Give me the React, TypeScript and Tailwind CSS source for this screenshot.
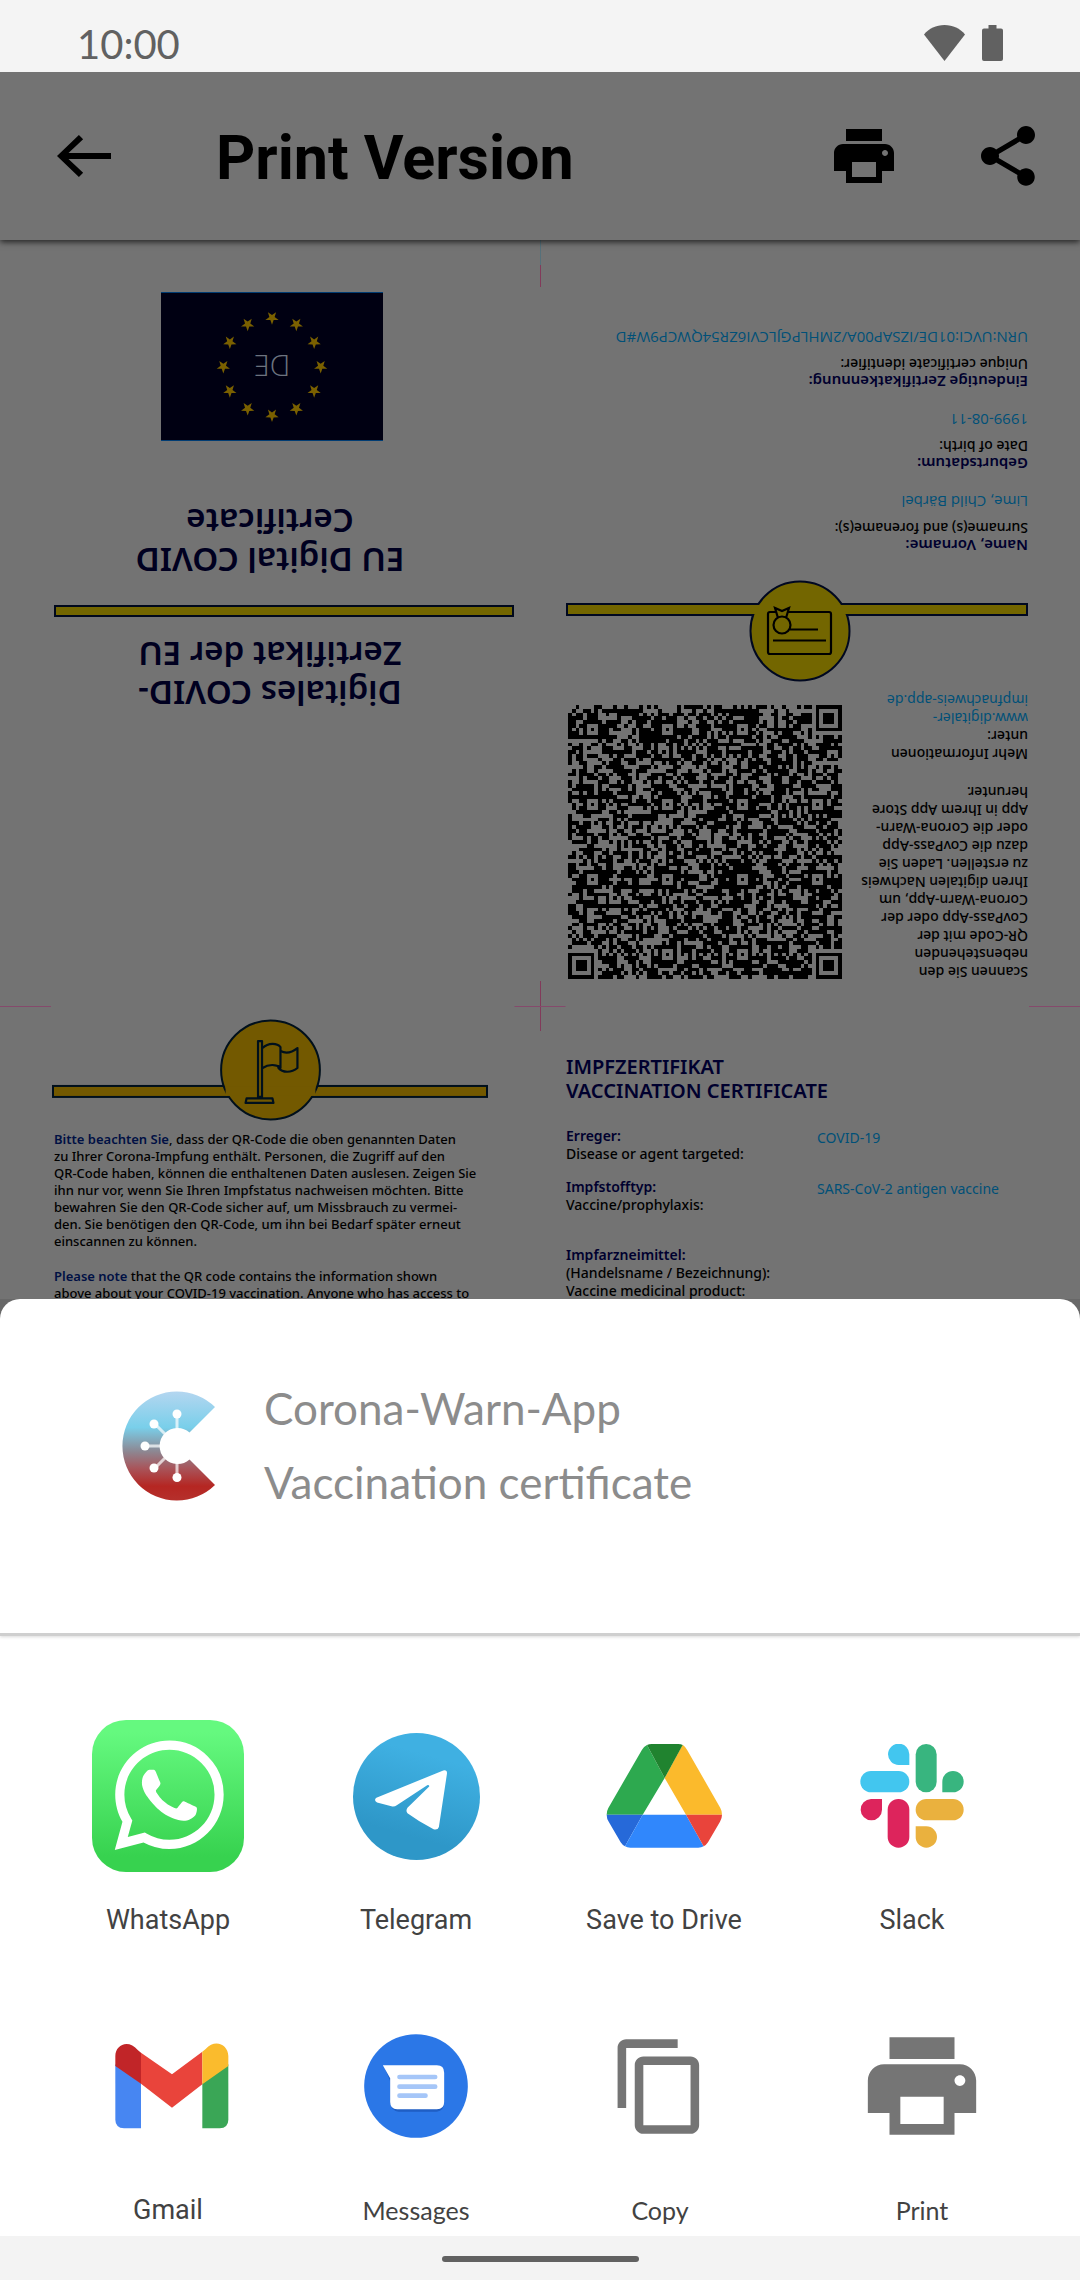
import React from "react";

const QR_SIZE = 73;
const QR_CENTERS = [6, 26, 46, 66];

function buildQrPath(): string {
  let seed = 20210811;
  const next = () => {
    seed = (Math.imul(seed, 1664525) + 1013904223) >>> 0;
    return seed / 4294967296;
  };
  const last = QR_SIZE - 7;
  const finders = [
    [0, 0],
    [last, 0],
    [0, last],
  ];
  let path = "";
  for (let y = 0; y < QR_SIZE; y++) {
    for (let x = 0; x < QR_SIZE; x++) {
      let on = next() < 0.57;
      if (x === 6 || y === 6) on = (x + y) % 2 === 0;
      for (const cx of QR_CENTERS) {
        for (const cy of QR_CENTERS) {
          const corner =
            (cx === 6 && cy === 6) || (cx === 6 && cy === 66) || (cx === 66 && cy === 6);
          const d = Math.max(Math.abs(x - cx), Math.abs(y - cy));
          if (!corner && d <= 2) on = d !== 1;
        }
      }
      for (const [fx, fy] of finders) {
        const d = Math.max(Math.abs(x - fx - 3), Math.abs(y - fy - 3));
        if (d <= 4) on = d <= 1 || d === 3;
      }
      if (on) path += `M${x} ${y}h1v1h-1z`;
    }
  }
  return path;
}

const qrPath = buildQrPath();

const PRINT_PATH =
  "M19 8H5c-1.66 0-3 1.34-3 3v6h4v4h12v-4h4v-6c0-1.66-1.34-3-3-3zm-3 11H8v-5h8v5zm3-7c-.55 0-1-.45-1-1s.45-1 1-1 1 .45 1 1-.45 1-1 1zm-1-9H6v4h12V3z";

function StatusBar() {
  return (
    <div className="relative z-20 flex h-[72px] shrink-0 items-end justify-between bg-[#f4f4f4] pr-[77px] pb-[11px] pl-[77px] text-[#616161]">
      <span className="font-['Lato',sans-serif] text-[40px] leading-[34px]">10:00</span>
      <div className="flex items-center gap-[17px]">
        <svg className="h-9 w-[41px]" viewBox="0 0 41 36" fill="currentColor" aria-label="Wi-Fi">
          <path d="M20.500 36L0 9.500C5 3.500 12 0 20.500 0S36 3.500 41 9.500z" />
        </svg>
        <svg className="h-9 w-[21px]" viewBox="0 0 21 36" fill="currentColor" aria-label="Battery">
          <path d="M6.500 0h8v3.500H19a2 2 0 0 1 2 2V34a2 2 0 0 1-2 2H2a2 2 0 0 1-2-2V5.500a2 2 0 0 1 2-2h4.500z" />
        </svg>
      </div>
    </div>
  );
}

function Header() {
  return (
    <header className="relative z-10 flex h-[168px] shrink-0 items-center bg-[#737373] pr-9 pl-12 text-black shadow-[0_2px_6px_rgba(0,0,0,0.7)]">
      <button type="button" aria-label="Back">
        <svg className="size-[72px]" viewBox="0 0 24 24" fill="currentColor">
          <path d="M21 11H6.830l4.880-4.590L10.300 5 3 12l7.300 7 1.410-1.410L6.830 13H21z" />
        </svg>
      </button>
      <h1 className="ml-24 flex-1 pt-1 font-['Roboto',sans-serif] text-[61px] leading-[72px] font-bold">
        Print Version
      </h1>
      <button type="button" aria-label="Print">
        <svg className="size-[72px]" viewBox="0 0 24 24" fill="currentColor">
          <path d={PRINT_PATH} />
        </svg>
      </button>
      <button type="button" aria-label="Share" className="ml-[72px]">
        <svg className="size-[72px]" viewBox="0 0 24 24" fill="currentColor">
          <path d="M18 16.080c-.76 0-1.440.3-1.960.77L8.910 12.700c.05-.23.09-.46.09-.7s-.04-.47-.09-.7l7.050-4.110c.54.5 1.250.81 2.040.81 1.660 0 3-1.340 3-3s-1.340-3-3-3-3 1.340-3 3c0 .24.04.47.09.7L8.040 9.810C7.500 9.310 6.790 9 6 9c-1.660 0-3 1.340-3 3s1.340 3 3 3c.79 0 1.500-.31 2.040-.81l7.120 4.160c-.05.21-.08.43-.08.65 0 1.610 1.310 2.920 2.920 2.920s2.920-1.310 2.920-2.920-1.310-2.920-2.920-2.920z" />
        </svg>
      </button>
    </header>
  );
}

function starPoints(cx: number, cy: number, r: number): string {
  return Array.from({ length: 10 }, (_, i) => {
    const radius = i % 2 === 0 ? r : r * 0.4;
    const a = (Math.PI * i) / 5 - Math.PI / 2;
    return `${(cx + radius * Math.cos(a)).toFixed(2)},${(cy + radius * Math.sin(a)).toFixed(2)}`;
  }).join(" ");
}

function EuFlag() {
  return (
    <div className="relative h-[149px] w-[222px] border-y border-[#003c73] bg-[#000012]">
      <svg className="absolute inset-0 size-full" viewBox="0 0 222 148" fill="#7a6000">
        {Array.from({ length: 12 }, (_, i) => {
          const a = (Math.PI * i) / 6;
          return (
            <polygon key={i} points={starPoints(111 + 49 * Math.sin(a), 74 - 49 * Math.cos(a), 7)} />
          );
        })}
      </svg>
      <span className="absolute inset-0 flex items-center justify-center font-['Open_Sans',sans-serif] text-[29px] font-light text-[#6d7480]">
        DE
      </span>
    </div>
  );
}

function CoverPanel() {
  return (
    <section className="flex h-[766px] rotate-180 flex-col pt-[293px] text-[#000020]">
      <h2 className="text-center text-[33px] leading-[39px] font-semibold">
        Digitales COVID-
        <br />
        Zertifikat der EU
      </h2>
      <div className="mt-[18px] mr-[54px] ml-[26px] h-3 border-2 border-[#00081c] bg-[#736600]" />
      <h2 className="mt-[25px] text-center text-[33px] leading-[39px] font-semibold">
        EU Digital COVID
        <br />
        Certificate
      </h2>
      <div className="mt-[61px] mr-1 self-center">
        <EuFlag />
      </div>
    </section>
  );
}

function CardDivider() {
  return (
    <svg className="block h-[102px] w-full rotate-180" viewBox="0 0 462 102" fill="none" stroke="#000820">
      <g fill="#736600" strokeWidth="2">
        <rect x="1" y="24" width="460" height="11" />
        <circle cx="234" cy="51" r="49.500" />
      </g>
      <rect x="182" y="25" width="104" height="9" fill="#736600" stroke="none" />
      <g stroke="#000" strokeWidth="2.200">
        <rect x="202" y="32" width="63" height="42" rx="2" />
        <path d="M224 49.500h28M207 60.500h53" />
        <path d="M212 38l-3-10 7 3 7-3-3 10" fill="#736600" />
        <circle cx="216" cy="45" r="8.500" fill="#736600" />
      </g>
    </svg>
  );
}

const holder = [
  { de: "Name, Vorname:", en: "Surname(s) and forename(s):", value: "Lime, Child Bärbel" },
  { de: "Geburtsdatum:", en: "Date of birth:", value: "1999-08-11" },
  {
    de: "Eindeutige Zertifikatkennung:",
    en: "Unique certificate identifier:",
    value: "URN:UVCI:01DE/IZSAP00A/2MHLPGJLCVI6ZR54QWCP9W#D",
  },
];

function HolderPanel() {
  return (
    <section className="flex h-[766px] rotate-180 flex-col pt-[25px] pr-[26px] pl-[52px]">
      <div className="flex h-[299px] justify-between">
        <div className="text-[14px] leading-[18px] font-medium whitespace-nowrap text-black">
          <p>
            Scannen Sie den
            <br />
            nebenstehenden
            <br />
            QR-Code mit der
            <br />
            CovPass-App oder der
            <br />
            Corona-Warn-App, um
            <br />
            Ihren digitalen Nachweis
            <br />
            zu erstellen. Laden Sie
            <br />
            dazu die CovPass-App
            <br />
            oder die Corona-Warn-
            <br />
            App in Ihrem App Store
            <br />
            herunter.
          </p>
          <p className="mt-5">
            Mehr Informationen
            <br />
            unter:
            <br />
            <a href="#app" className="font-normal text-[#005078]">
              www.digitaler-
              <br />
              impfnachweis-app.de
            </a>
          </p>
        </div>
        <svg
          className="mt-0.5 mr-0.5 size-[274px] shrink-0"
          viewBox="0 0 73 73"
          shapeRendering="crispEdges"
          aria-label="QR code"
        >
          <path d={qrPath} fill="#000" />
        </svg>
      </div>
      <CardDivider />
      <dl className="mt-[25px] flex flex-col gap-5 text-[14px] leading-[18px] whitespace-nowrap">
        {holder.map((f) => (
          <div key={f.de}>
            <dt className="text-[15px] font-semibold text-[#00002e]">{f.de}</dt>
            <dt className="font-medium text-black">{f.en}</dt>
            <dd className="mt-2 font-['Open_Sans',sans-serif] text-[15px] text-[#005078]">{f.value}</dd>
          </div>
        ))}
      </dl>
    </section>
  );
}

function FlagDivider() {
  return (
    <svg className="block h-[104px] w-full" viewBox="0 0 438 104" fill="none" stroke="#00101c">
      <g fill="#735900" strokeWidth="2">
        <rect x="1" y="67" width="435" height="11" />
        <circle cx="219" cy="51" r="49.500" />
      </g>
      <rect x="174" y="68" width="90" height="9" fill="#735900" stroke="none" />
      <g strokeWidth="2.200" strokeLinejoin="round">
        <path d="M206.500 22h4v56h-4zM195 79.500h26l1 4.500h-28z" />
        <path d="M211 29c6-6 15-5 18-1v21c-4-4-12-4-18 0" />
        <path d="M229 32c6 3 12 1 17-3v20c-6 5-15 5-19 0v-3" />
      </g>
    </svg>
  );
}

function NoticePanel() {
  return (
    <section className="pt-[13px] pr-[51px] pl-[52px]">
      <FlagDivider />
      <div className="mt-2 flex flex-col gap-[18px] pl-0.5 text-[13px] leading-[17px] font-medium whitespace-nowrap text-black">
        <p>
          <span className="font-semibold text-[#001044]">Bitte beachten Sie</span>, dass der QR-Code die oben
          genannten Daten
          <br />
          zu Ihrer Corona-Impfung enthält. Personen, die Zugriff auf den
          <br />
          QR-Code haben, können die enthaltenen Daten auslesen. Zeigen Sie
          <br />
          ihn nur vor, wenn Sie Ihren Impfstatus nachweisen möchten. Bitte
          <br />
          bewahren Sie den QR-Code sicher auf, um Missbrauch zu vermei-
          <br />
          den. Sie benötigen den QR-Code, um ihn bei Bedarf später erneut
          <br />
          einscannen zu können.
        </p>
        <p>
          <span className="font-semibold text-[#001044]">Please note</span> that the QR code contains the information
          shown
          <br />
          above about your COVID-19 vaccination. Anyone who has access to
        </p>
      </div>
    </section>
  );
}

function VaccinePanel() {
  return (
    <section className="pt-[49px] pr-6 pl-[26px]">
      <h2 className="text-[20px] leading-6 font-semibold text-[#00002e]">
        IMPFZERTIFIKAT
        <br />
        VACCINATION CERTIFICATE
      </h2>
      <dl className="mt-6 grid grid-cols-[251px_1fr] text-[14px] leading-[18px] whitespace-nowrap">
        <dt className="font-medium text-black">
          <span className="font-semibold text-[#00002e]">Erreger:</span>
          <br />
          Disease or agent targeted:
        </dt>
        <dd className="pt-0.5 text-[#005078]">COVID-19</dd>
        <dt className="mt-[15px] font-medium text-black">
          <span className="font-semibold text-[#00002e]">Impfstofftyp:</span>
          <br />
          Vaccine/prophylaxis:
        </dt>
        <dd className="mt-[15px] pt-0.5 text-[#005078]">SARS-CoV-2 antigen vaccine</dd>
        <dt className="mt-[32px] font-medium text-black">
          <span className="font-semibold text-[#00002e]">Impfarzneimittel:</span>
          <br />
          (Handelsname / Bezeichnung):
          <br />
          Vaccine medicinal product:
        </dt>
      </dl>
    </section>
  );
}

function DocumentPreview() {
  return (
    <main className="relative min-h-0 flex-1 overflow-hidden bg-[#737373] font-['Noto_Sans','Open_Sans',sans-serif]">
      <div className="grid grid-cols-2">
        <CoverPanel />
        <HolderPanel />
        <NoticePanel />
        <VaccinePanel />
      </div>
      <div className="absolute top-0 left-1/2 h-[25px] w-px bg-[#55707a]" />
      <div className="absolute top-[25px] left-1/2 h-[22px] w-px bg-[#823a5a]" />
      <div className="absolute top-[741px] left-1/2 h-[50px] w-px bg-[#823a5a]" />
      <div className="absolute top-[766px] left-0 h-px w-[51px] bg-[#854a6c]" />
      <div className="absolute top-[766px] left-1/2 h-px w-[51px] -translate-x-1/2 bg-[#854a6c]" />
      <div className="absolute top-[766px] right-0 h-px w-[51px] bg-[#854a6c]" />
    </main>
  );
}

function CoronaWarnLogo() {
  return (
    <svg className="h-[110px] w-[94px] shrink-0" viewBox="122 1391 94 110">
      <defs>
        <linearGradient id="cwa" x1="0" y1="0" x2="0" y2="1">
          <stop offset="0" stopColor="#b4d6f0" />
          <stop offset="0.330" stopColor="#79cfea" />
          <stop offset="0.550" stopColor="#8d8792" />
          <stop offset="0.700" stopColor="#a8565c" />
          <stop offset="0.870" stopColor="#b52622" />
          <stop offset="1" stopColor="#b5302c" />
        </linearGradient>
      </defs>
      <path d="M215 1407L189.500 1432.500A18 18 0 1 0 189.500 1459.500L215 1485A54.500 54.500 0 1 1 215 1407z" fill="url(#cwa)" />
      <g stroke="#fff" strokeWidth="3" strokeOpacity="0.700">
        <path d="M177 1430V1413M165 1434L154 1423M161 1446H145M165 1458L154 1469M177 1462V1478" />
      </g>
      <g fill="#fff">
        <circle cx="177" cy="1414" r="4.500" />
        <circle cx="154" cy="1424" r="4.500" />
        <circle cx="145" cy="1446" r="4.500" />
        <circle cx="154" cy="1468" r="4.500" />
        <circle cx="177" cy="1477.500" r="4.500" />
      </g>
    </svg>
  );
}

function WhatsAppIcon() {
  return (
    <svg className="size-[152px]" viewBox="0 0 152 152">
      <defs>
        <linearGradient id="wa" x1="0" y1="0" x2="0" y2="1">
          <stop offset="0.080" stopColor="#65f97f" />
          <stop offset="0.900" stopColor="#37d24f" />
        </linearGradient>
      </defs>
      <rect width="152" height="152" rx="34" fill="url(#wa)" />
      <path
        transform="translate(22.500 20.500) scale(4.560)"
        fill="#fff"
        d="M17.472 14.382c-.297-.149-1.758-.867-2.030-.967-.273-.099-.471-.148-.67.15-.197.297-.767.966-.94 1.164-.173.199-.347.223-.644.075-.297-.15-1.255-.463-2.390-1.475-.883-.788-1.480-1.761-1.653-2.059-.173-.297-.018-.458.13-.606.134-.133.298-.347.446-.52.149-.174.198-.298.298-.497.099-.198.05-.371-.025-.52-.075-.149-.669-1.612-.916-2.207-.242-.579-.487-.5-.669-.51-.173-.008-.371-.01-.57-.01-.198 0-.52.074-.792.372-.272.297-1.040 1.016-1.040 2.479 0 1.462 1.065 2.875 1.213 3.074.149.198 2.096 3.200 5.077 4.487.709.306 1.262.489 1.694.625.712.227 1.360.195 1.871.118.571-.085 1.758-.719 2.006-1.413.248-.694.248-1.289.173-1.413-.074-.124-.272-.198-.57-.347m-5.421 7.403h-.004a9.870 9.870 0 01-5.031-1.378l-.361-.214-3.741.982.998-3.648-.235-.374a9.860 9.860 0 01-1.510-5.260c.001-5.450 4.436-9.884 9.888-9.884 2.640 0 5.122 1.030 6.988 2.898a9.825 9.825 0 012.893 6.994c-.003 5.450-4.437 9.884-9.885 9.884m8.413-18.297A11.815 11.815 0 0012.050 0C5.495 0 .16 5.335.157 11.892c0 2.096.547 4.142 1.588 5.945L.057 24l6.305-1.654a11.882 11.882 0 005.683 1.448h.005c6.554 0 11.890-5.335 11.893-11.893a11.821 11.821 0 00-3.480-8.413z"
      />
    </svg>
  );
}

function TelegramIcon() {
  return (
    <svg className="size-[127px]" viewBox="877 131 380 380">
      <defs>
        <linearGradient id="tg" x1="0.600" y1="0.100" x2="0.400" y2="0.800">
          <stop offset="0.100" stopColor="#3fb0e2" />
          <stop offset="1" stopColor="#2e97c8" />
        </linearGradient>
      </defs>
      <circle cx="1067" cy="321" r="190" fill="url(#tg)" />
      <path
        fill="#fff"
        d="M947 325L1147 243Q1160 240 1158 254L1134 412Q1131 422 1118 419Q1074 396 1040 371Q1034 365 1040 355L1105 291Q1106 286 1099 287L1008 347Q1001 352 992 350L949 339Q938 332 947 325z"
      />
    </svg>
  );
}

function DriveIcon() {
  return (
    <svg className="h-[104px] w-[116px]" viewBox="195 155 348 312">
      <path fill="#2da94f" d="M318 158Q308 163 303 172L202 347Q197 356 197 367H305L371 257z" />
      <path fill="#fbba2c" d="M425 157Q433 163 438 172L538 347Q543 356 543 367H435L371 257z" />
      <path fill="#20832f" d="M318 158Q324 155 332 155H412Q420 155 425 158L371 257z" />
      <path fill="#2669d9" d="M197 367H305L252 462Q244 458 239 450L204 390Q197 380 197 367z" />
      <path fill="#3087fc" d="M305 367H435L488 462Q481 466 472 466H268Q258 466 252 462z" />
      <path fill="#e9443b" d="M435 367H543Q543 378 537 388L501 450Q496 458 488 462z" />
    </svg>
  );
}

function SlackIcon() {
  return (
    <svg className="size-[104px]" viewBox="966 155 310 312">
      <g fill="#42c6ef">
        <path d="M1113 218H1081A32 32 0 1 1 1113 187z" />
        <rect x="966" y="236" width="147" height="64" rx="32" />
      </g>
      <g fill="#38b57f">
        <rect x="1132" y="155" width="63" height="145" rx="31.500" />
        <path d="M1212 300V268A32 32 0 1 1 1244 300z" />
      </g>
      <g fill="#dd245c">
        <path d="M1031 320V352A32 32 0 1 1 998 320z" />
        <rect x="1048" y="320" width="65" height="146" rx="32" />
      </g>
      <g fill="#eab13e">
        <rect x="1132" y="320" width="144" height="64" rx="32" />
        <path d="M1132 402H1164A32 32 0 1 1 1132 434z" />
      </g>
    </svg>
  );
}

function GmailIcon() {
  return (
    <svg className="h-[86px] w-[122px]" viewBox="141 126 366 258">
      <path fill="#4786f2" d="M166 190L243 247V382H192Q166 380 166 356z" />
      <path fill="#3aa656" d="M505 190L427 247V382H479Q505 380 505 356z" />
      <path fill="#e9443b" d="M243 155L336 220L427 152V250L336 320L243 248z" />
      <path fill="#c12528" d="M166 195V165C166 132 205 113 234 148L243 155V248z" />
      <path fill="#fabb2d" d="M505 195V165C505 132 466 111 437 144L427 152V250z" />
    </svg>
  );
}

function MessagesIcon() {
  return (
    <svg className="size-[104px]" viewBox="912 103 311 312">
      <circle cx="1067.500" cy="259" r="155.500" fill="#2b77e7" />
      <path fill="#1f5ec4" d="M975 208L990 245V310Q995 336 1015 336H1130Q1152 334 1152 308V300z" />
      <path fill="#fff" d="M968 197H1130Q1152 197 1152 219V307Q1152 329 1130 329H1011Q990 329 990 307V236z" />
      <g stroke="#a5c6f8" strokeWidth="14" strokeLinecap="round">
        <path d="M1018 232H1125M1018 261H1125M1018 288H1096" />
      </g>
    </svg>
  );
}

function CopyIcon() {
  return (
    <svg className="size-[103px]" viewBox="0 0 24 24" fill="#757575">
      <path d="M16 1H4c-1.100 0-2 .9-2 2v14h2V3h12V1zm3 4H8c-1.100 0-2 .9-2 2v14c0 1.100.9 2 2 2h11c1.100 0 2-.9 2-2V7c0-1.100-.9-2-2-2zm0 16H8V7h11v14z" />
    </svg>
  );
}

function PrintIcon() {
  return (
    <svg className="size-[130px]" viewBox="0 0 24 24" fill="#757575">
      <path d={PRINT_PATH} />
    </svg>
  );
}

const roboto = "font-['Roboto',sans-serif] text-[27px]";
const lato = "font-['Lato',sans-serif] text-[25px]";

const targets = [
  { label: "WhatsApp", icon: <WhatsAppIcon />, text: roboto, box: "" },
  { label: "Telegram", icon: <TelegramIcon />, text: roboto, box: "" },
  { label: "Save to Drive", icon: <DriveIcon />, text: roboto, box: "" },
  { label: "Slack", icon: <SlackIcon />, text: roboto, box: "" },
  { label: "Gmail", icon: <GmailIcon />, text: roboto, box: "" },
  { label: "Messages", icon: <MessagesIcon />, text: lato, box: "" },
  { label: "Copy", icon: <CopyIcon />, text: lato, box: "pr-2" },
  { label: "Print", icon: <PrintIcon />, text: lato, box: "pl-5" },
];

function ShareSheet() {
  return (
    <div className="shrink-0 bg-[#686868]">
      <section className="rounded-t-[20px] bg-white" aria-label="Share">
        <div className="flex h-[337px] items-start border-b-[3px] border-[#cfcfcf] pt-[72px] pl-[122px] shadow-[0_1px_3px_rgba(0,0,0,0.15)]">
          <div className="pt-5">
            <CoronaWarnLogo />
          </div>
          <div className="ml-12 font-['Lato',sans-serif] text-[44px] leading-[74px] text-[#8c8c8c]">
            <p>Corona-Warn-App</p>
            <p>Vaccination certificate</p>
          </div>
        </div>
        <div className="grid grid-cols-4 gap-y-[70px] px-11 pt-[84px] pb-1.5">
          {targets.map((t) => (
            <button key={t.label} type="button" className={`flex flex-col items-center ${t.box}`}>
              <span className="flex h-[152px] items-center justify-center">{t.icon}</span>
              <span className={`mt-7 leading-10 whitespace-nowrap text-[#424242] ${t.text}`}>{t.label}</span>
            </button>
          ))}
        </div>
      </section>
    </div>
  );
}

export default function App() {
  return (
    <div className="flex h-screen flex-col overflow-hidden bg-[#f4f4f4]">
      <StatusBar />
      <Header />
      <DocumentPreview />
      <ShareSheet />
      <nav className="flex h-11 shrink-0 items-center justify-center bg-[#f3f3f3]">
        <div className="mt-0.5 h-1.5 w-[197px] rounded-full bg-[#616161]" />
      </nav>
    </div>
  );
}
